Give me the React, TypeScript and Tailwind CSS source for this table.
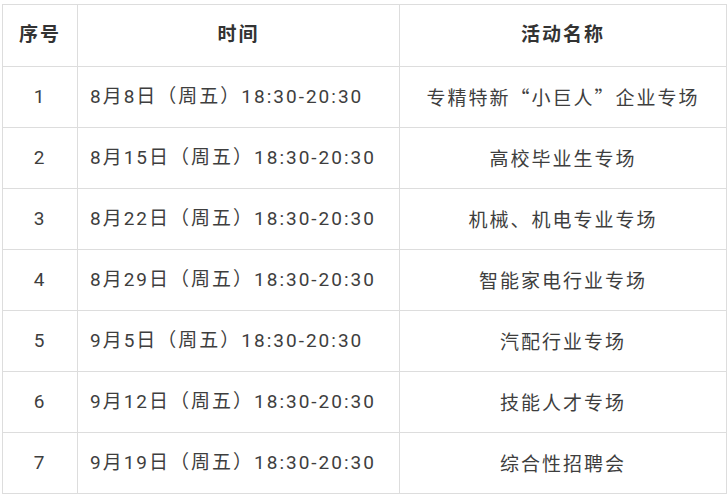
const rows = [
  ["1", "8月8日（周五）18:30-20:30", "专精特新“小巨人”企业专场"],
  ["2", "8月15日（周五）18:30-20:30", "高校毕业生专场"],
  ["3", "8月22日（周五）18:30-20:30", "机械、机电专业专场"],
  ["4", "8月29日（周五）18:30-20:30", "智能家电行业专场"],
  ["5", "9月5日（周五）18:30-20:30", "汽配行业专场"],
  ["6", "9月12日（周五）18:30-20:30", "技能人才专场"],
  ["7", "9月19日（周五）18:30-20:30", "综合性招聘会"],
];

const cell = "border border-[#dddddd] p-0";

export default function App() {
  return (
    <div
      className="pt-[4px] pl-[2px] bg-white w-[727px] h-[497px] text-[#3e3e3e]"
      style={{ fontFamily: 'Roboto, "Noto Sans CJK SC", sans-serif' }}
    >
      <table className="border-collapse table-fixed w-[724px] text-[19px] tracking-[2px]">
        <colgroup>
          <col className="w-[75px]" />
          <col className="w-[322px]" />
          <col className="w-[327px]" />
        </colgroup>
        <thead>
          <tr className="h-[62px] font-bold text-[#333333]">
            <th className={`${cell} text-center`}>序号</th>
            <th className={`${cell} text-center`}>时间</th>
            <th className={`${cell} text-center`}>活动名称</th>
          </tr>
        </thead>
        <tbody>
          {rows.map((r) => (
            <tr key={r[0]} className="h-[61px]">
              <td className={`${cell} text-center`}>{r[0]}</td>
              <td className={`${cell} text-left pl-[12px]`}>{r[1]}</td>
              <td
                className={`${cell} text-center`}
                style={{ fontFamily: '"Noto Sans CJK SC", sans-serif' }}
              >
                {r[2]}
              </td>
            </tr>
          ))}
        </tbody>
      </table>
    </div>
  );
}
